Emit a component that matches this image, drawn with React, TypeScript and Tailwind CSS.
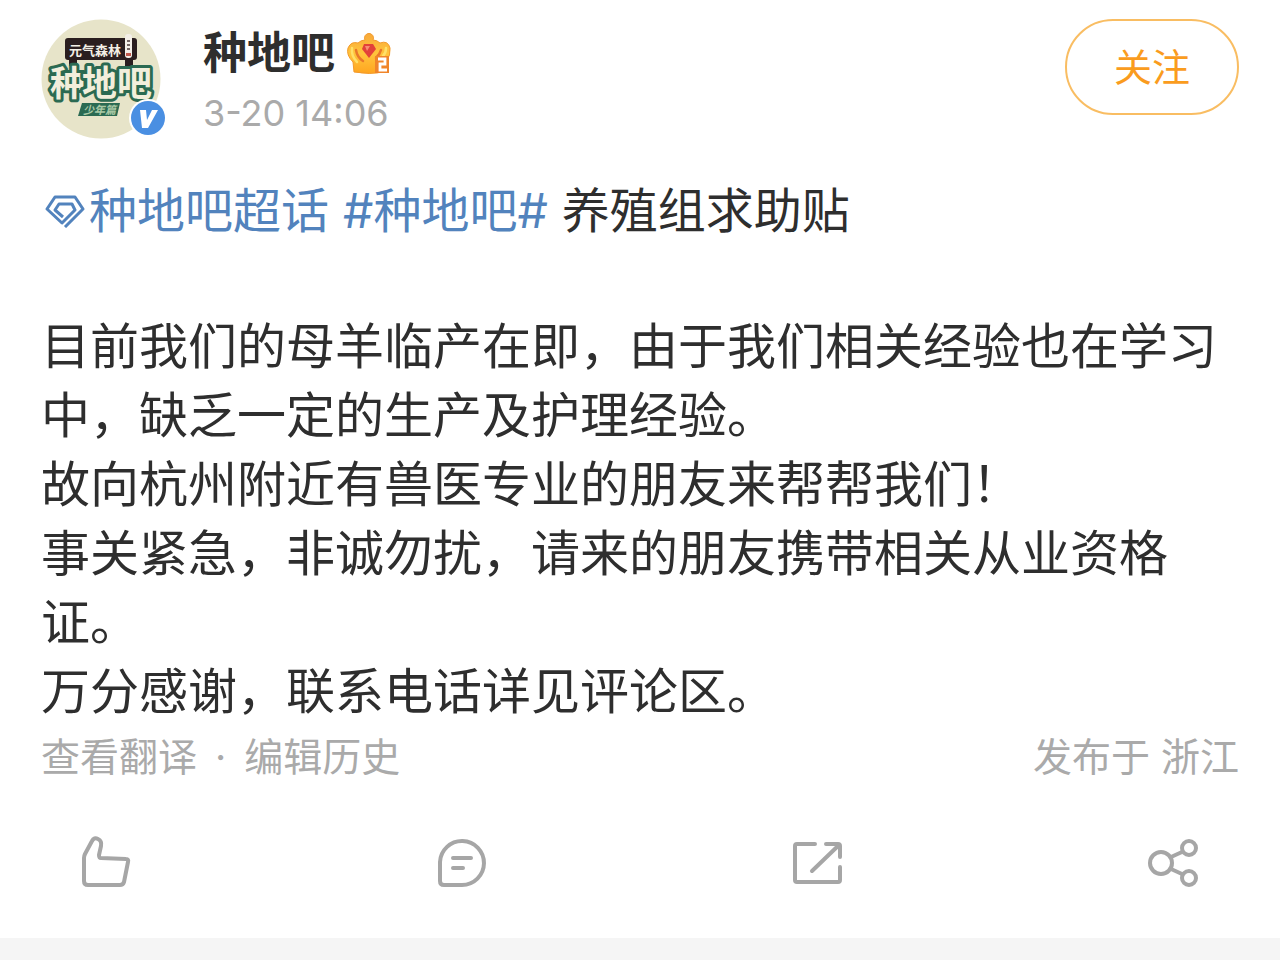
import type { ReactNode } from "react";

function Avatar() {
    return (
        <a href="#profile" aria-label="种地吧" className="relative block size-[120px] shrink-0">
            <svg viewBox="0 0 120 120" className="size-full">
                <circle cx="60" cy="60" r="59.5" fill="#e7e4c9" />
                <rect x="24" y="19" width="72" height="22" rx="3" fill="#2a1e1f" />
                <path d="M28 39h8v8h-8zM84 39h8v8h-8z" fill="#2a1e1f" />
                <text x="28" y="36" fontSize="13" fontWeight="700" fill="#f4efe6">
                    元气森林
                </text>
                <rect x="84" y="15" width="7" height="24" rx="3" fill="#f3efe8" />
                <path d="M86 22h3M86 26h3M86 30h3" stroke="#4b3a39" strokeWidth="1.5" />
                <path d="M85 34h5v3h-5z" fill="#c05a4e" />
                <g fontSize="35" fontWeight="700" stroke="#2b6a52" strokeWidth="6" strokeLinejoin="round" fill="#f2eedb" paintOrder="stroke">
                    <text x="9" y="77">种</text>
                    <text x="41" y="77">地</text>
                    <text x="76" y="77">吧</text>
                </g>
                <path d="M41 84h38l-3 13H37z" fill="#2b6a52" />
                <text x="42" y="95" fontSize="11" fontWeight="700" fontStyle="italic" fill="#a9c9a6">
                    少年篇
                </text>
            </svg>
            <svg viewBox="0 0 38 38" className="absolute -right-1.5 bottom-0.5 size-[38px]">
                <circle cx="19" cy="19" r="19" fill="#fff" />
                <circle cx="19" cy="19" r="17" fill="#4a8fe2" />
                <path d="M11 11h6l1 10 5-10h6L19 29h-6z" fill="#fff" />
            </svg>
        </a>
    );
}

function Crown() {
    return (
        <svg viewBox="0 0 44 44" className="size-11">
            <defs>
                <linearGradient id="gold" x1="0" y1="0" x2="0" y2="1">
                    <stop offset="0" stopColor="#f8a93a" />
                    <stop offset="0.5" stopColor="#ffc43c" />
                    <stop offset="1" stopColor="#ffa51f" />
                </linearGradient>
            </defs>
            <path
                d="M18 9a4.5 4.5 0 1 1 8 0q4 0 7 3 8-3 10 5 1 7-4 14l-1 10q-16 3-31 0l-1-10Q-1 24 1 17q3-7 10-5 3-3 7-3z"
                fill="url(#gold)"
                stroke="#f39a2c"
                strokeWidth="1"
            />
            <path d="M5 17q-1 8 5 14M39 17q0 5-3 8" fill="none" stroke="#ffe069" strokeWidth="2.5" strokeLinecap="round" />
            <path d="M9 19q1 7 7 11M34 19q-1 4-5 8" fill="none" stroke="#e9782a" strokeWidth="2.5" strokeLinecap="round" />
            <path d="M17 13h9l3 5-7 9-7-9z" fill="#e2413a" />
            <path d="M18 15h5l-3 5z" fill="#f88a73" />
            <path d="M28 25h14v17H28z" fill="#f0852a" />
            <path d="M31 28h7v5h-5v6h7" fill="none" stroke="#fff" strokeWidth="2.8" />
        </svg>
    );
}

function Gem() {
    return (
        <svg viewBox="0 0 40 34" className="h-[34px] w-10 shrink-0" fill="none" stroke="#5283bd" strokeWidth="3" strokeLinejoin="round">
            <path d="M20 33L38 15 30 3H10L2 15l15 14 13-13-3-6H14l-4 6 8 7" />
        </svg>
    );
}

function Action({ label, children }: { label: string; children: ReactNode }) {
    return (
        <button type="button" aria-label={label}>
            <svg viewBox="0 0 52 56" className="h-14 w-[52px]" fill="none" stroke="#a6a6a6" strokeWidth="4" strokeLinejoin="round" strokeLinecap="round">
                {children}
            </svg>
        </button>
    );
}

function App() {
    return (
        <div lang="zh-CN" className="bg-[#f5f5f5] pb-[22px] font-['Inter','Noto_Sans_CJK_SC',sans-serif] text-[#2e2e2e]">
            <article className="bg-white px-[41px] pt-[19px] pb-[47px]">
                <header className="flex items-start">
                    <Avatar />
                    <div className="ml-[42px] flex-1">
                        <div className="flex h-[68px] items-center gap-3">
                            <h1 className="text-[44px] leading-[68px] font-bold">种地吧</h1>
                            <Crown />
                        </div>
                        <time className="block text-[36px] leading-[52px] text-[#aaaaaa]">3-20 14:06</time>
                    </div>
                    <button type="button" className="h-24 w-[174px] rounded-full border-2 border-[#f9bd62] text-[38px] text-[#fa9c1e]">
                        关注
                    </button>
                </header>

                <div className="mt-[38px]">
                    <p className="flex items-center gap-[14px] pl-1 text-[48px] leading-[68px]">
                        <a href="#super-topic" className="flex items-center gap-1 text-[#5283bd]">
                            <Gem />
                            种地吧超话
                        </a>
                        <a href="#topic" className="text-[#5283bd]">#种地吧#</a>
                        <span>养殖组求助贴</span>
                    </p>
                    <div className="mt-[67px] text-[49px] leading-[69px]">
                        <p>目前我们的母羊临产在即，由于我们相关经验也在学习中，缺乏一定的生产及护理经验。</p>
                        <p>故向杭州附近有兽医专业的朋友来帮帮我们！</p>
                        <p>事关紧急，非诚勿扰，请来的朋友携带相关从业资格证。</p>
                        <p>万分感谢，联系电话详见评论区。</p>
                    </div>
                </div>

                <div className="flex items-center justify-between text-[39px] leading-[62px] text-[#aaaaaa]">
                    <div className="flex gap-[18px]">
                        <a href="#translate">查看翻译</a>
                        <span>·</span>
                        <a href="#history">编辑历史</a>
                    </div>
                    <span>发布于 浙江</span>
                </div>

                <footer className="mt-[47px] flex items-center justify-between px-[39px]">
                    <Action label="赞">
                        <path d="M21 23L46 24Q49 24 48 27L44 47Q43 50 40 50H8Q4 50 4 46V23Q4 21 5 19L12 6Q14 2 18 4 22 6 21 11L19 20Q19 23 21 23z" />
                    </Action>
                    <Action label="评论">
                        <path d="M4 46V27A22 22 0 1 1 26 50H8Q4 50 4 46zM17 23h18M17 33h10" />
                    </Action>
                    <Action label="转发">
                        <path d="M23 9H5Q3 9 3 11V45Q3 47 5 47H46Q48 47 48 45V32M34 9H46Q48 9 48 11V22M47 10L20 36" />
                    </Action>
                    <Action label="分享">
                        <circle cx="13" cy="28" r="11" />
                        <circle cx="41" cy="13" r="7" />
                        <circle cx="41" cy="43" r="7" />
                        <path d="M23 22L34 17M23 34L34 39" />
                    </Action>
                </footer>
            </article>
        </div>
    );
}

export default App;
